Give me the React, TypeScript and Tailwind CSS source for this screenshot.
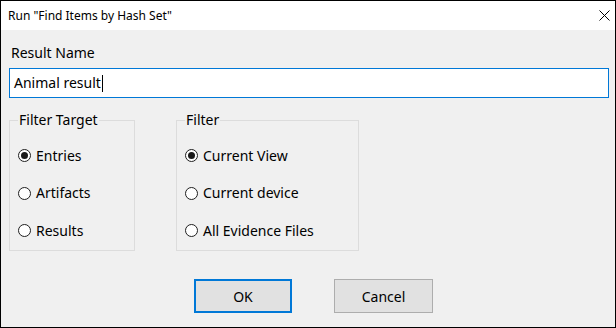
const font = { fontFamily: '"Noto Sans", "Open Sans", sans-serif' };

const Radio = ({ label, checked }: { label: string; checked?: boolean }) => (
  <div className="flex h-[37.5px] items-center">
    <span className="flex h-[13px] w-[13px] items-center justify-center rounded-full border border-[#1f1f1f] bg-white">
      {checked && <span className="h-[7px] w-[7px] rounded-full bg-[#1a1a1a]" />}
    </span>
    <span className="ml-[5px] text-[14px] leading-[20px] text-black">{label}</span>
  </div>
);

const Group = ({
  title,
  width,
  items,
}: {
  title: string;
  width: string;
  items: { label: string; checked?: boolean }[];
}) => (
  <div className={`relative h-[131px] border border-[#dcdcdc] ${width}`}>
    <span className="absolute left-[8px] top-[-11px] bg-[#f0f0f0] px-[1px] text-[14px] leading-[20px] text-black">
      {title}
    </span>
    <div className="flex flex-col pl-[8px] pt-[16px]">
      {items.map((it) => (
        <Radio key={it.label} label={it.label} checked={it.checked} />
      ))}
    </div>
  </div>
);

export default function App() {
  return (
    <div
      style={font}
      className="flex h-[328px] w-[616px] flex-col border border-black bg-[#f0f0f0]"
    >
      {/* title bar */}
      <div className="flex h-[29px] items-center justify-between bg-white pl-[7px] pr-[5px]">
        <span className="text-[12px] leading-[16px] text-black">Run "Find Items by Hash Set"</span>
        <svg width="11" height="11" viewBox="0 0 11 11" className="mb-[1px]">
          <path d="M0.5 0.5 L10.5 10.5 M10.5 0.5 L0.5 10.5" stroke="#000" strokeWidth="1" />
        </svg>
      </div>

      <div className="flex flex-col pl-[8px] pr-[6px]">
        <div className="mt-[13px] pl-[2px] text-[14px] leading-[20px] text-black">Result Name</div>
        <div className="mt-[5px] flex h-[30px] items-center border border-[#0078d7] bg-white pl-[4px]">
          <span className="text-[14px] leading-[20px] text-black">Animal result</span>
          <span className="ml-[1px] h-[17px] w-[1px] bg-black" />
        </div>

        <div className="mt-[22px] flex gap-[41px]">
          <Group
            title="Filter Target"
            width="w-[126px]"
            items={[{ label: "Entries", checked: true }, { label: "Artifacts" }, { label: "Results" }]}
          />
          <Group
            title="Filter"
            width="w-[183px]"
            items={[
              { label: "Current View", checked: true },
              { label: "Current device" },
              { label: "All Evidence Files" },
            ]}
          />
        </div>

        <div className="mt-[28px] flex gap-[42px] pl-[185px]">
          <button className="h-[34px] w-[98px] border-2 border-[#0078d7] bg-[#e1e1e1] text-[14px] text-black">
            OK
          </button>
          <button className="h-[34px] w-[99px] border border-[#adadad] bg-[#e1e1e1] text-[14px] text-black">
            Cancel
          </button>
        </div>
      </div>
    </div>
  );
}
